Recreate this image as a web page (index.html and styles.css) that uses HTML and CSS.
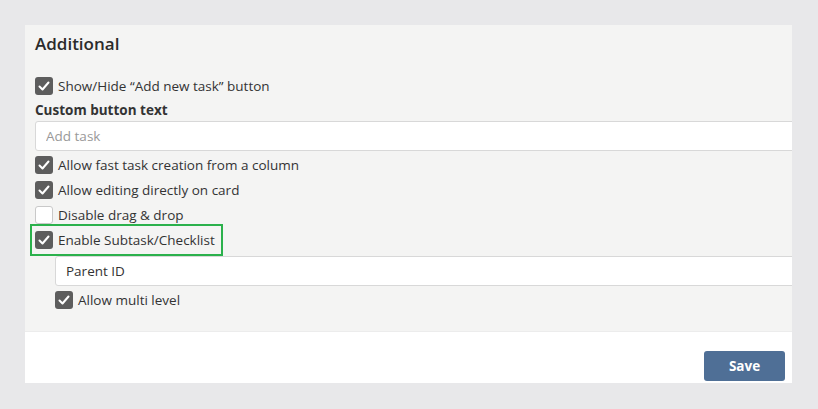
FILE: index.html
```html
<!DOCTYPE html>
<html lang="en">

<head>
  <meta charset="UTF-8">
  <title>Additional settings</title>
  <link rel="stylesheet" href="styles.css">
</head>

<body>
  <div class="panel">
    <div class="settings">
      <h2>Additional</h2>

      <label class="check-row">
        <span class="box checked"><svg viewBox="0 0 18 18"><polyline points="4.5,9.5 7.5,12.5 13.5,5.5" /></svg></span>
        Show/Hide “Add new task” button
      </label>

      <div class="field-label">Custom button text</div>
      <input type="text" class="text-input" placeholder="Add task">

      <label class="check-row">
        <span class="box checked"><svg viewBox="0 0 18 18"><polyline points="4.5,9.5 7.5,12.5 13.5,5.5" /></svg></span>
        Allow fast task creation from a column
      </label>
      <label class="check-row">
        <span class="box checked"><svg viewBox="0 0 18 18"><polyline points="4.5,9.5 7.5,12.5 13.5,5.5" /></svg></span>
        Allow editing directly on card
      </label>
      <label class="check-row">
        <span class="box"></span>
        Disable drag &amp; drop
      </label>
      <label class="check-row highlight">
        <span class="box checked"><svg viewBox="0 0 18 18"><polyline points="4.5,9.5 7.5,12.5 13.5,5.5" /></svg></span>
        Enable Subtask/Checklist
      </label>

      <div class="sub-options">
        <input type="text" class="text-input" value="Parent ID">
        <label class="check-row">
          <span class="box checked"><svg viewBox="0 0 18 18"><polyline points="4.5,9.5 7.5,12.5 13.5,5.5" /></svg></span>
          Allow multi level
        </label>
      </div>
    </div>

    <div class="footer">
      <button type="button" class="save-button">Save</button>
    </div>
  </div>
</body>

</html>
```

FILE: styles.css
```css
body {
  font-family: "Open Sans", "Noto Sans", sans-serif;
  font-size: 13.5px;
  color: #333;
  background-color: #e8e8ea;
  margin: 0;
  padding: 25px 26px 26px 25px;
}

.panel {
  width: 767px;
  overflow: hidden;
  background: #fff;
}

.settings {
  background: #f4f4f3;
  padding: 6px 0 19px 10px;
  border-bottom: 1px solid #ececec;
}

h2 {
  margin: 0 0 16px;
  font-size: 17px;
  font-weight: 600;
  line-height: 26px;
  color: #2b2b2b;
}

.check-row {
  display: flex;
  align-items: center;
  gap: 5px;
  height: 25px;
  cursor: pointer;
}

.box {
  width: 18px;
  height: 18px;
  box-sizing: border-box;
  border-radius: 3px;
  border: 1px solid #c9c9c9;
  background: #fff;
  flex-shrink: 0;
}

.box.checked {
  border: none;
  background: #5d5d5d;
}

.box svg {
  display: block;
  width: 18px;
  height: 18px;
  fill: none;
  stroke: #fff;
  stroke-width: 2;
  stroke-linecap: round;
  stroke-linejoin: round;
}

.field-label {
  font-weight: 700;
  line-height: 22px;
  margin-top: 1px;
}

.text-input {
  display: block;
  width: calc(100% + 10px);
  height: 30px;
  box-sizing: border-box;
  padding: 0 10px;
  border: 1px solid #d8d8d8;
  border-radius: 3px;
  background: #fff;
  font-family: inherit;
  font-size: 13.5px;
  color: #333;
  margin-bottom: 1px;
}

.text-input::placeholder {
  color: #999;
}

.highlight {
  width: fit-content;
  height: 28px;
  margin: -3px 0 -2px -5px;
  padding: 0 6px 0 3px;
  border: 2px solid #2bb14c;
}

.sub-options {
  padding-left: 20px;
  margin-top: 2px;
}

.sub-options .text-input {
  margin-bottom: 1px;
}

.footer {
  display: flex;
  justify-content: flex-end;
  padding: 19px 7px 2px 0;
}

.save-button {
  width: 81px;
  height: 30px;
  border: none;
  border-radius: 3px;
  background-color: #4f6f96;
  color: #fff;
  font-family: inherit;
  font-size: 13.5px;
  font-weight: 700;
  cursor: pointer;
}
```
